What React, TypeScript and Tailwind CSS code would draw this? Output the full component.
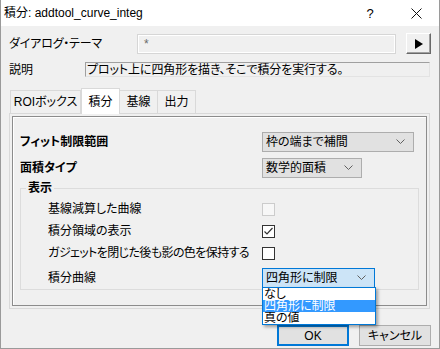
import React from "react";

function Chevron() {
  return (
    <svg width="9" height="6" viewBox="0 0 9 6" className="shrink-0">
      <polyline points="0.5,0.5 4.5,4.5 8.5,0.5" fill="none" stroke="#606060" strokeWidth="1" />
    </svg>
  );
}

interface ComboProps {
  value: string;
  width: string;
  focused?: boolean;
}

function Combo({ value, width, focused }: ComboProps) {
  const cls = focused
    ? "border-[#0078d7] bg-[#cce4f7]"
    : "border-[#adadad] bg-[#e1e1e1]";
  return (
    <div className={`flex h-[20px] items-center justify-between border pl-[3px] pr-[8px] ${cls} ${width}`}>
      <span>{value}</span>
      <Chevron />
    </div>
  );
}

function CheckBox({ checked, disabled }: { checked?: boolean; disabled?: boolean }) {
  const cls = disabled ? "border-[#cccccc] bg-[#f7f7f7]" : "border-[#333333] bg-white";
  return (
    <div className={`flex h-[13px] w-[13px] shrink-0 items-center justify-center border ${cls}`}>
      {checked && (
        <svg width="11" height="11" viewBox="0 0 11 11">
          <polyline points="1.5,5.5 4,8 9.5,2" fill="none" stroke="#333" strokeWidth="1.2" />
        </svg>
      )}
    </div>
  );
}

const tabs = [
  { label: "ROIボックス", width: "w-[71px]" },
  { label: "積分", width: "w-[39px]", active: true },
  { label: "基線", width: "w-[39px]" },
  { label: "出力", width: "w-[39px]" },
];

const options = ["なし", "四角形に制限", "真の値"];

export default function App() {
  return (
    <div className="relative flex h-[349px] w-[440px] flex-col overflow-hidden border-x border-b border-[#9a9a9a] bg-[#f0f0f0] font-['Liberation_Sans','Noto_Sans_CJK_JP',sans-serif] text-[12px] leading-none text-black [font-feature-settings:'palt']">
      {/* title bar */}
      <div className="flex h-[26px] shrink-0 items-center bg-white">
        <span className="pl-[3px]">積分: addtool_curve_integ</span>
        <div className="ml-auto flex h-full">
          <div className="flex w-[46px] items-center justify-center text-[13px]">?</div>
          <div className="flex w-[46px] items-center justify-center">
            <svg width="11" height="11" viewBox="0 0 11 11">
              <path d="M0.5 0.5 L10.5 10.5 M10.5 0.5 L0.5 10.5" stroke="#111" strokeWidth="1" />
            </svg>
          </div>
        </div>
      </div>

      {/* theme row */}
      <div className="mt-[7px] flex h-[21px] items-center">
        <div className="w-[136px] pl-[8px] tracking-[-0.2px]">ダイアログ・テーマ</div>
        <div className="flex h-[20px] w-[259px] items-center border border-[#d6d6d6] bg-[#f0f0f0] pl-[6px] text-[#6a6a6a] shadow-[inset_1px_1px_0_#ffffff,inset_-1px_-1px_0_#ffffff]">
          *
        </div>
        <div className="ml-[10px] flex h-[21px] w-[25px] items-center justify-center border border-t-white border-l-white border-r-[#696969] border-b-[#696969] bg-[#f0f0f0] shadow-[inset_-1px_-1px_0_#a0a0a0]">
          <svg width="8" height="10" viewBox="0 0 8 10">
            <polygon points="0,0 8,5 0,10" fill="#000" />
          </svg>
        </div>
      </div>

      {/* description row */}
      <div className="mt-[8px] flex h-[15px] items-center">
        <div className="w-[84px] pl-[8px]">説明</div>
        <div className="flex h-[15px] w-[345px] items-center border border-[#a0a0a0] border-r-[#e3e3e3] border-b-[#e3e3e3] pl-[1px] tracking-[-0.1px]">
          プロット上に四角形を描き、そこで積分を実行する。
        </div>
      </div>

      {/* tabs */}
      <div className="mt-[11px] flex h-[25px] items-end pl-[9px]">
        {tabs.map((t) =>
          t.active ? (
            <div
              key={t.label}
              className={`relative z-10 -mb-px flex h-[26px] items-center justify-center border border-b-0 border-[#d9d9d9] bg-white ${t.width}`}
            >
              {t.label}
            </div>
          ) : (
            <div
              key={t.label}
              className={`-ml-px flex h-[23px] items-center justify-center border border-b-0 border-[#d9d9d9] bg-[#f0f0f0] first:ml-0 ${t.width}`}
            >
              {t.label}
            </div>
          )
        )}
      </div>

      {/* tab panel */}
      <div className="ml-[8px] flex h-[196px] w-[421px] flex-col border border-[#d9d9d9] p-[2px]">
        <div className="flex flex-1 flex-col border border-[#8c8c8c] shadow-[inset_1px_1px_0_#ffffff]">
          <div className="mt-[15px] flex h-[20px] items-center">
            <div className="w-[249px] pl-[7px] font-bold">フィット制限範囲</div>
            <Combo value="枠の端まで補間" width="w-[152px]" />
          </div>
          <div className="mt-[6px] flex h-[20px] items-center">
            <div className="w-[249px] pl-[7px] font-bold">面積タイプ</div>
            <Combo value="数学的面積" width="w-[100px]" />
          </div>

          {/* group box */}
          <div className="relative ml-[7px] mt-[10px] h-[102px] w-[399px] border border-[#dcdcdc]">
            <span className="absolute left-[5px] top-[-7px] bg-[#f0f0f0] px-[2px] font-bold">表示</span>
            <div className="flex flex-col pt-[9px]">
              <div className="flex h-[22px] items-center">
                <div className="w-[241px] pl-[27px]">基線減算した曲線</div>
                <CheckBox disabled />
              </div>
              <div className="flex h-[22px] items-center">
                <div className="w-[241px] pl-[27px]">積分領域の表示</div>
                <CheckBox checked />
              </div>
              <div className="flex h-[22px] items-center">
                <div className="w-[241px] shrink-0 whitespace-nowrap pl-[27px] tracking-[-0.6px]">
                  ガジェットを閉じた後も影の色を保持する
                </div>
                <CheckBox />
              </div>
              <div className="mt-[4px] flex h-[20px] items-center">
                <div className="w-[241px] pl-[27px]">積分曲線</div>
                <Combo value="四角形に制限" width="w-[113px]" focused />
              </div>
            </div>
          </div>
        </div>
      </div>

      {/* buttons */}
      <div className="mt-[16px] flex justify-end gap-[10px] pr-[8px]">
        <div className="flex h-[21px] w-[72px] items-center justify-center border-2 border-[#0078d7] bg-[#e1e1e1]">
          OK
        </div>
        <div className="flex h-[21px] w-[72px] items-center justify-center border border-[#adadad] bg-[#e1e1e1]">
          キャンセル
        </div>
      </div>

      {/* open dropdown list */}
      <div className="absolute left-[261px] top-[287px] z-20 flex w-[114px] flex-col border border-[#0078d7] bg-white shadow-[2px_2px_3px_rgba(0,0,0,0.35)]">
        {options.map((o, i) => (
          <div
            key={o}
            className={`flex h-[12px] items-center overflow-hidden pl-[1px] leading-[12px] ${i === 1 ? "bg-[#3399ff] text-white" : ""}`}
          >
            {o}
          </div>
        ))}
      </div>
    </div>
  );
}
